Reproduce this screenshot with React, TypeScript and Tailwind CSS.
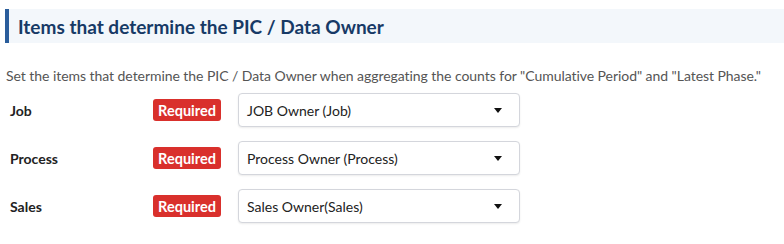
import React from "react";

const rows = [
  { label: "Job", value: "JOB Owner (Job)" },
  { label: "Process", value: "Process Owner (Process)" },
  { label: "Sales", value: "Sales Owner(Sales)" },
];

export default function App() {
  return (
    <div
      className="w-[784px] h-[244px] bg-white overflow-hidden"
      style={{ fontFamily: "Lato, 'Noto Sans', sans-serif" }}
    >
      <div className="pt-[9px] pl-[5px]">
        <div className="h-[34px] border-l-4 border-[#2a5d9b] bg-[#f3f7fb] flex items-center pl-[9px]">
          <span className="text-[19px] font-bold text-[#173a66] leading-none">
            Items that determine the PIC / Data Owner
          </span>
        </div>
      </div>
      <p className="mt-[23px] pl-[6px] text-[14px] leading-[20px] text-[#555] tracking-[-0.05px]">
        Set the items that determine the PIC / Data Owner when aggregating the counts for "Cumulative Period" and "Latest Phase."
      </p>
      <div className="mt-[7px] flex flex-col gap-[14px]">
        {rows.map((r) => (
          <div key={r.label} className="flex items-center h-[34px]">
            <div className="w-[153px] pl-[10px] text-[14px] font-bold text-[#222]">{r.label}</div>
            <div className="w-[68px] h-[22px] rounded-[3px] bg-[#d9302c] text-white text-[14.5px] leading-[18px] font-bold flex items-center justify-center pt-[2px]">
              Required
            </div>
            <div className="ml-[17px] w-[282px] h-[34px] rounded-[4px] border border-[#d4d6dc] bg-white shadow-[0_1px_2px_rgba(0,0,0,0.08)] flex items-center justify-between pl-[8px] pr-[17px]">
              <span className="text-[14px] text-[#222]">{r.value}</span>
              <svg width="8" height="5" viewBox="0 0 8 5">
                <path d="M0 0 H8 L4 5 Z" fill="#111" />
              </svg>
            </div>
          </div>
        ))}
      </div>
    </div>
  );
}
